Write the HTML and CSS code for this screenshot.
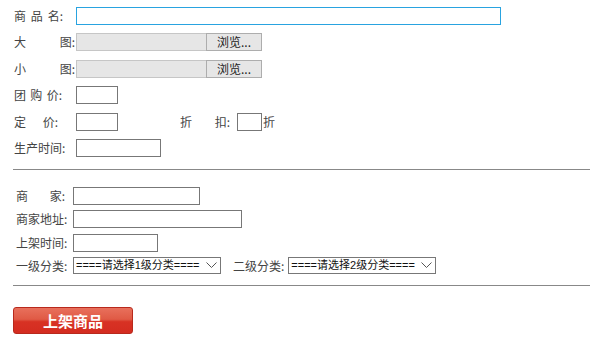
FILE: index.html
```html
<!DOCTYPE html>
<html>
    <head>
        <title>上架商品</title>
        <link rel="stylesheet" href="styles.css">
    </head>
    <body>
        <div class="page">
            <div class="goods">
                <div class="row">
                    <div class="cell"><span class="lbl w49"><span>商</span><span>品</span><span>名:</span></span></div>
                    <input type="text" class="txt focus w-name">
                </div>
                <div class="row">
                    <div class="cell"><span class="lbl w61"><span>大</span><span>图:</span></span></div>
                    <div class="file"><span class="file-path"></span><span class="file-btn">浏览...</span></div>
                </div>
                <div class="row">
                    <div class="cell"><span class="lbl w61"><span>小</span><span>图:</span></span></div>
                    <div class="file"><span class="file-path"></span><span class="file-btn">浏览...</span></div>
                </div>
                <div class="row">
                    <div class="cell"><span class="lbl w48"><span>团</span><span>购</span><span>价:</span></span></div>
                    <input type="text" class="txt w-price">
                </div>
                <div class="row">
                    <div class="cell"><span class="lbl w44"><span>定</span><span>价:</span></span></div>
                    <input type="text" class="txt w-price">
                    <span class="lbl w50 discount"><span>折</span><span>扣:</span></span>
                    <input type="text" class="txt w-rate">
                    <span class="unit">折</span>
                </div>
                <div class="row">
                    <div class="cell"><span class="lbl">生产时间:</span></div>
                    <input type="text" class="txt w-date">
                </div>
            </div>

            <div class="line"></div>

            <div class="shop">
                <div class="row">
                    <div class="cell"><span class="lbl w49"><span>商</span><span>家:</span></span></div>
                    <input type="text" class="txt w-shop">
                </div>
                <div class="row">
                    <div class="cell"><span class="lbl">商家地址:</span></div>
                    <input type="text" class="txt w-addr">
                </div>
                <div class="row">
                    <div class="cell"><span class="lbl">上架时间:</span></div>
                    <input type="text" class="txt w-date">
                </div>
                <div class="row">
                    <div class="cell"><span class="lbl">一级分类:</span></div>
                    <div class="sel">
                        <span class="sel-text">====请选择1级分类====</span>
                        <svg width="11" height="7" viewBox="0 0 11 7"><path d="M0.5 0.5 L5.5 5.5 L10.5 0.5" fill="none" stroke="#555" stroke-width="1"/></svg>
                    </div>
                    <span class="lbl second">二级分类:</span>
                    <div class="sel">
                        <span class="sel-text">====请选择2级分类====</span>
                        <svg width="11" height="7" viewBox="0 0 11 7"><path d="M0.5 0.5 L5.5 5.5 L10.5 0.5" fill="none" stroke="#555" stroke-width="1"/></svg>
                    </div>
                </div>
            </div>

            <div class="line line-bottom"></div>

            <button class="submit-btn">上架商品</button>
        </div>
    </body>
</html>
```

FILE: styles.css
```css
body {
    margin: 0;
    font-family: "Noto Sans CJK SC", "Liberation Sans", sans-serif;
    font-size: 12px;
    color: #444;
    background-color: #ffffff;
}
.page {
    padding: 7px 1px 0 13px;
}
.goods {
    display: grid;
    row-gap: 8.4px;
}
.shop {
    display: grid;
    row-gap: 5.3px;
}
.row {
    display: flex;
    align-items: center;
    height: 18px;
}
.cell {
    width: 63px;
    flex-shrink: 0;
}
.shop .cell {
    width: 57px;
    padding-left: 3px;
}
.lbl {
    display: inline-flex;
    justify-content: space-between;
    white-space: nowrap;
    margin-left: 1px;
    line-height: 18px;
}
.shop .lbl { margin-left: 0; }
.w44 { width: 44px; }
.w48 { width: 48px; }
.w49 { width: 49px; }
.w50 { width: 50px; }
.w61 { width: 61px; }

.txt {
    box-sizing: border-box;
    height: 18px;
    margin: 0;
    padding: 0 2px;
    border: 1px solid #777;
    background-color: #fff;
    font-size: 12px;
    outline: none;
}
.focus { border-color: #29a3e0; }
.w-name { width: 425px; }
.w-price { width: 42px; }
.w-rate { width: 25px; }
.w-date { width: 85px; }
.w-shop { width: 127px; }
.w-addr { width: 169px; }

.discount { margin-left: 62px; margin-right: 7px; }
.unit { margin-left: 1px; }

.file {
    display: flex;
    height: 18px;
}
.file-path {
    box-sizing: border-box;
    width: 130px;
    height: 18px;
    background-color: #e6e6e6;
    border: 1px solid #c6c6c6;
    border-right: none;
}
.file-btn {
    box-sizing: border-box;
    width: 56px;
    height: 18px;
    background-color: #e6e6e6;
    border: 1px solid #adadad;
    color: #222;
    text-align: center;
    line-height: 16px;
}

.sel {
    box-sizing: border-box;
    display: flex;
    align-items: center;
    justify-content: space-between;
    flex-shrink: 0;
    width: 148px;
    height: 17px;
    padding: 0 3px 0 2px;
    border: 1px solid #777;
    color: #111;
    line-height: 15px;
    white-space: nowrap;
}
.sel-text {
    font-family: "Liberation Sans", "Noto Sans CJK SC", sans-serif;
    font-size: 11px;
    overflow: hidden;
}
.sel svg { flex-shrink: 0; }
.shop .second { margin-left: 12px; margin-right: 4px; }

.line {
    height: 1px;
    background-color: #888;
    margin: 12px 0 17px 0;
}
.line-bottom {
    margin: 10px 0 21px 0;
}

.submit-btn {
    display: block;
    width: 120px;
    height: 27px;
    padding: 0;
    border: 1px solid #b8291c;
    border-radius: 3px;
    background: linear-gradient(#e8705c 0%, #e05a45 45%, #d83224 55%, #d42c20 100%);
    color: #fff;
    font-family: "Noto Sans CJK SC", sans-serif;
    font-size: 15px;
    font-weight: bold;
    cursor: pointer;
}
```
